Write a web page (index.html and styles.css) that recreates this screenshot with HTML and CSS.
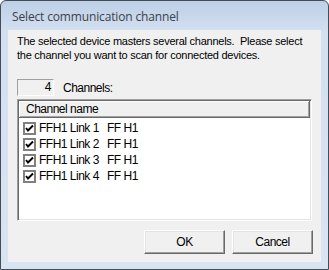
FILE: index.html
```html
<!DOCTYPE html>
<html lang="en">
<head>
    <meta charset="UTF-8">
    <title>Select communication channel</title>
    <link rel="stylesheet" href="styles.css">
</head>
<body>

<div class="window">
    <div class="titlebar">Select communication channel</div>
    <div class="client">
        <p class="message">The selected device masters several channels.&nbsp; Please select<br>the channel you want to scan for connected devices.</p>

        <div class="count-row">
            <div class="count-box">4</div>
            <span class="count-label">Channels:</span>
        </div>

        <div class="listbox">
            <div class="list-header">Channel name</div>
            <div class="list-row">
                <span class="check"><svg width="9" height="9" viewBox="0 0 9 9"><path d="M1 4 L3 6.5 L8 1.5" fill="none" stroke="#000" stroke-width="2"/></svg></span>
                <span class="cell-name">FFH1 Link 1</span><span class="cell-type">FF H1</span>
            </div>
            <div class="list-row">
                <span class="check"><svg width="9" height="9" viewBox="0 0 9 9"><path d="M1 4 L3 6.5 L8 1.5" fill="none" stroke="#000" stroke-width="2"/></svg></span>
                <span class="cell-name">FFH1 Link 2</span><span class="cell-type">FF H1</span>
            </div>
            <div class="list-row">
                <span class="check"><svg width="9" height="9" viewBox="0 0 9 9"><path d="M1 4 L3 6.5 L8 1.5" fill="none" stroke="#000" stroke-width="2"/></svg></span>
                <span class="cell-name">FFH1 Link 3</span><span class="cell-type">FF H1</span>
            </div>
            <div class="list-row">
                <span class="check"><svg width="9" height="9" viewBox="0 0 9 9"><path d="M1 4 L3 6.5 L8 1.5" fill="none" stroke="#000" stroke-width="2"/></svg></span>
                <span class="cell-name">FFH1 Link 4</span><span class="cell-type">FF H1</span>
            </div>
        </div>

        <div class="buttons">
            <button class="btn">OK</button>
            <button class="btn">Cancel</button>
        </div>
    </div>
</div>

</body>
</html>
```

FILE: styles.css
```css
body {
    margin: 0;
    background-color: #ffffff;
    font-family: 'Liberation Sans', Arial, sans-serif;
}
.window {
    width: 329px;
    height: 270px;
    box-sizing: border-box;
    border: 1px solid #464c55;
    border-radius: 6px 6px 0 0;
    background: linear-gradient(to bottom, #bccfe6 0px, #d3e0f0 30px, #d9e4f2 100%);
    display: flex;
    flex-direction: column;
}
.titlebar {
    height: 29px;
    line-height: 32px;
    padding-left: 11px;
    font-family: 'Open Sans', sans-serif;
    font-size: 12px;
    letter-spacing: -0.15px;
    color: #3c4148;
    white-space: nowrap;
}
.client {
    margin: 0 7px 7px 7px;
    flex: 1;
    background-color: #f0f0f0;
    padding: 4px 8px 0 9px;
    display: flex;
    flex-direction: column;
    font-size: 12px;
    letter-spacing: -0.5px;
    color: #000;
}
.message {
    margin: 0;
    font-size: 11px;
    letter-spacing: -0.25px;
    line-height: 14px;
    white-space: nowrap;
}
.count-row {
    display: flex;
    align-items: center;
    margin-top: 17px;
    gap: 9px;
}
.count-box {
    width: 33px;
    height: 15px;
    border: 1px solid;
    border-color: #a0a0a0 #ffffff #ffffff #a0a0a0;
    text-align: right;
    padding-right: 2px;
    line-height: 15px;
}
.listbox {
    margin-top: 3px;
    width: 295px;
    height: 122px;
    box-sizing: border-box;
    background-color: #ffffff;
    border: 1px solid;
    border-color: #a0a0a0 #ffffff #ffffff #a0a0a0;
    box-shadow: inset 1px 1px 0 #696969, inset -1px -1px 0 #e3e3e3;
    padding: 1px;
}
.list-header {
    height: 17px;
    box-sizing: border-box;
    line-height: 16px;
    padding-left: 7px;
    background-color: #f0f0f0;
    border-right: 1px solid #696969;
    border-bottom: 1px solid #696969;
    box-shadow: inset 1px 1px 0 #ffffff, inset -1px -1px 0 #a0a0a0;
    margin-bottom: 2px;
}
.list-row {
    display: flex;
    align-items: center;
    height: 16px;
    padding-left: 4px;
}
.check {
    flex-shrink: 0;
    width: 13px;
    height: 13px;
    box-sizing: border-box;
    border: 2px solid #808080;
    background-color: #ffffff;
    display: flex;
    align-items: center;
    justify-content: center;
    margin-right: 3px;
}
.cell-name {
    flex-shrink: 0;
    width: 68px;
}
.buttons {
    display: flex;
    justify-content: flex-end;
    gap: 7px;
    margin-top: 9px;
}
.btn {
    width: 81px;
    height: 24px;
    font-family: 'Liberation Sans', Arial, sans-serif;
    font-size: 12px;
    letter-spacing: -0.5px;
    color: #000;
    background-color: #f0f0f0;
    border: 1px solid;
    border-color: #ffffff #696969 #696969 #ffffff;
    box-shadow: inset -1px -1px 0 #a0a0a0, inset 1px 1px 0 #e3e3e3;
    padding: 0;
}
```
